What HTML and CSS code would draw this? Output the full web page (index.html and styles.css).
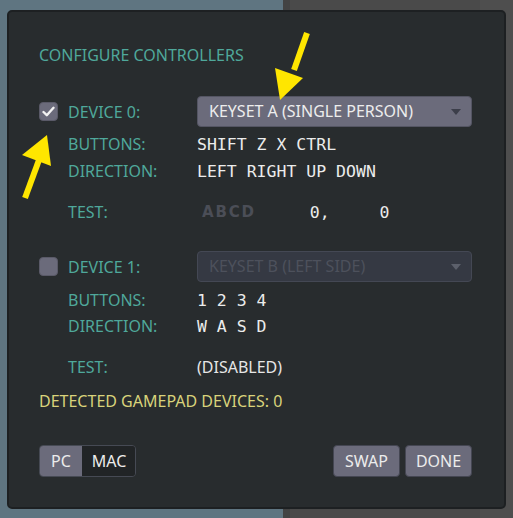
FILE: index.html
```html
<!DOCTYPE HTML>
<html>
<head>
    <meta charset="UTF-8">
    <title>Configure Controllers</title>
    <link rel="stylesheet" href="styles.css">
</head>
<body>
    <div id="dialog">
        <p class="title">CONFIGURE CONTROLLERS</p>

        <div class="row device first">
            <span class="check on">
                <svg width="13" height="11" viewBox="0 0 13 11"><path d="M1.5 6 L4.8 9.2 L11.5 1.8" fill="none" stroke="#f2f2f2" stroke-width="2.4" stroke-linecap="round" stroke-linejoin="round"/></svg>
            </span>
            <span class="label">DEVICE 0:</span>
            <div class="select">KEYSET A (SINGLE PERSON)<i class="caret"></i></div>
        </div>
        <div class="row keys gap5">
            <span></span><span class="label">BUTTONS:</span><span class="mono">SHIFT Z X CTRL</span>
        </div>
        <div class="row keys gap3">
            <span></span><span class="label">DIRECTION:</span><span class="mono">LEFT RIGHT UP DOWN</span>
        </div>
        <div class="row keys gap17">
            <span></span><span class="label">TEST:</span>
            <span class="test"><b class="abcd">ABCD</b><span class="mono axis">0,</span><span class="mono axis2">0</span></span>
        </div>

        <div class="row device second">
            <span class="check"></span>
            <span class="label">DEVICE 1:</span>
            <div class="select off">KEYSET B (LEFT SIDE)<i class="caret"></i></div>
        </div>
        <div class="row keys gap6">
            <span></span><span class="label">BUTTONS:</span><span class="mono">1 2 3 4</span>
        </div>
        <div class="row keys gap2">
            <span></span><span class="label">DIRECTION:</span><span class="mono">W A S D</span>
        </div>
        <div class="row keys gap17">
            <span></span><span class="label">TEST:</span><span class="plain">(DISABLED)</span>
        </div>

        <p class="detected">DETECTED GAMEPAD DEVICES: 0</p>

        <div class="footer">
            <div class="toggle"><span class="pc">PC</span><span class="mac">MAC</span></div>
            <div class="actions">
                <span class="btn">SWAP</span>
                <span class="btn">DONE</span>
            </div>
        </div>

        <svg class="arrow arrow1" width="60" height="90" viewBox="0 0 60 90">
            <path d="M47 8 L34 45" stroke="#ffe600" stroke-width="6" stroke-linecap="butt"/>
            <polygon points="15,43 43,53 20,75" fill="#ffe600"/>
        </svg>
        <svg class="arrow arrow2" width="50" height="80" viewBox="0 0 50 80">
            <path d="M8 76 L22 38" stroke="#ffe600" stroke-width="6"/>
            <polygon points="30,13 5,33 34,44" fill="#ffe600"/>
        </svg>
    </div>
</body>
</html>
```
FILE: styles.css
```css
body{margin:0;font-family:"Noto Sans","Open Sans",sans-serif;}
p{margin:0;}
html{
    background:
        linear-gradient(to right, #5f7581 0, #5f7581 283px, #434343 283px, #434343 290px, #4a4a4a 290px, #4a4a4a 480px, #4e4e4e 480px);
    height:518px;
    overflow:hidden;
}

#dialog{
    position: relative;
    box-sizing: border-box;
    width: 499px;
    margin: 10px 0 0 7px;
    padding: 31px 32px 30px 30px;
    background: #282c2e;
    border: 2px solid #1d2022;
    border-radius: 5px;
    font-size: 16px;
}

.title{
    height: 24px;
    line-height: 24px;
    color: #4fa89b;
}

.row{
    display: grid;
    grid-template-columns: 29px 129px 275px;
    align-items: center;
    height: 24px;
}
.row.device{height: 31px;}
.row.first{margin-top: 29px;}
.row.second{margin-top: 27px;}
.gap2{margin-top: 2px;}
.gap3{margin-top: 3px;}
.gap5{margin-top: 5px;}
.gap6{margin-top: 6px;}
.gap17{margin-top: 17px;}

.label{
    color: #4fa89b;
    line-height: 24px;
}
.mono{
    font-family: "DejaVu Sans Mono","Liberation Mono",monospace;
    font-size: 16.5px;
    color: #ececec;
    white-space: pre;
}
.plain{color: #e6e6e6;}

.check{
    display: flex;
    align-items: center;
    justify-content: center;
    box-sizing: border-box;
    width: 19px;
    height: 19px;
    background: #6b6b7b;
    border: 1px solid #5a5a68;
    border-radius: 4px;
}

.select{
    position: relative;
    box-sizing: border-box;
    height: 31px;
    line-height: 29px;
    padding-left: 11px;
    background: #6b6b7b;
    border: 1px solid #545563;
    border-radius: 4px;
    color: #ededed;
}
.select.off{
    background: #353943;
    border-color: #444854;
    color: #4d515c;
}
.caret{
    position: absolute;
    right: 10px;
    top: 12px;
    width: 0;
    height: 0;
    border-left: 5px solid transparent;
    border-right: 5px solid transparent;
    border-top: 6px solid #3c3e4a;
}
.select.off .caret{border-top-color: #5c606b;}

.test{display: flex; align-items: center;}
.abcd{
    margin-left: 5px;
    font-family: "DejaVu Sans","Noto Sans",sans-serif;
    font-size: 15px;
    letter-spacing: 1.8px;
    color: #4b4e57;
}
.axis{margin-left: 54px;}
.axis2{margin-left: 50px;}

.detected{
    margin-top: 10px;
    height: 24px;
    line-height: 24px;
    color: #d9d37b;
}

.footer{
    display: flex;
    justify-content: space-between;
    margin-top: 32px;
    width: 433px;
}
.toggle{
    display: flex;
    box-sizing: border-box;
    height: 32px;
    border: 1px solid #464a54;
    border-radius: 4px;
    overflow: hidden;
    color: #ececec;
}
.toggle span{
    line-height: 30px;
    padding: 0 11px;
}
.pc{background: #6b6b7b;}
.toggle .mac{background: #212426; padding: 0 9px 0 10px;}

.actions{display: flex; gap: 5px;}
.btn{
    box-sizing: border-box;
    width: 67px;
    height: 32px;
    line-height: 30px;
    text-align: center;
    background: #6b6b7b;
    border: 1px solid #444652;
    border-radius: 4px;
    color: #ececec;
}

.arrow{position: absolute;}
.arrow1{left: 251px; top: 13px;}
.arrow2{left: 8px; top: 110px;}
```
